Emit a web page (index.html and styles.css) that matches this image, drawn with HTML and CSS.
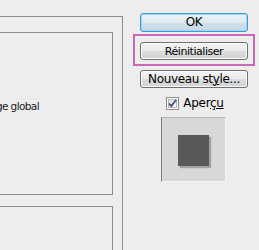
FILE: index.html
```html
<!DOCTYPE html>
<html lang="fr">
<head>
    <meta charset="UTF-8">
    <title>Style de calque</title>
    <link rel="stylesheet" href="styles.css">
</head>
<body>

    <!-- Left: settings panel (cut by the window edge) -->
    <div class="panel">
        <div class="group group-top">
            <div class="option-row">
                <span class="option-label">Utiliser l'éclairage global</span>
            </div>
        </div>
        <div class="group group-bottom"></div>
    </div>

    <!-- Right: dialog buttons and preview -->
    <div class="side">
        <button class="btn btn-default">OK</button>
        <div class="highlight">
            <button class="btn">Réinitialiser</button>
        </div>
        <button class="btn btn-big">Nouveau st<u>y</u>le...</button>

        <label class="preview-toggle">
            <svg class="check" width="13" height="13" viewBox="0 0 13 13">
                <defs>
                    <linearGradient id="cb" x1="0" y1="0" x2="1" y2="1">
                        <stop offset="0" stop-color="#dcdcdc"/>
                        <stop offset="1" stop-color="#ffffff"/>
                    </linearGradient>
                </defs>
                <rect x="0.5" y="0.5" width="12" height="12" fill="#fff" stroke="#8f8f8f"/>
                <rect x="2.5" y="2.5" width="8" height="8" fill="url(#cb)" stroke="#b9b9b9"/>
                <path d="M3 6.5 L5.3 9 L10 3" fill="none" stroke="#3d4f8a" stroke-width="1.8"/>
            </svg>
            <span>Aper<u>çu</u></span>
        </label>

        <div class="preview">
            <div class="swatch"></div>
        </div>
    </div>

</body>
</html>
```

FILE: styles.css
```css
/* General Styles */
body, html {
    margin: 0;
    padding: 0;
    height: 100%;
    overflow: hidden;
    background: #ededed;
    font-family: 'DejaVu Sans', sans-serif;
    color: #000;
}

body {
    display: flex;
    align-items: flex-start;
}

/* Left panel */
.panel {
    box-sizing: border-box;
    flex: none;
    width: 143px;
    height: 260px;
    margin-left: -20px;
    margin-top: 16px;
    border: 1px solid #8d8d8d;
    padding-top: 15px;
    padding-right: 9px;
}

.group {
    box-sizing: border-box;
    border: 1px solid #8d8d8d;
}

.group-top {
    height: 163px;
}

.group-bottom {
    height: 80px;
    margin-top: 11px;
}

.option-row {
    display: flex;
    justify-content: flex-end;
    width: 57px;
    margin-top: 67px;
}

.option-label {
    flex: none;
    white-space: nowrap;
    font-size: 10.5px;
    line-height: 13px;
    letter-spacing: -0.6px;
    color: #1b1b1b;
}

/* Right column */
.side {
    flex: none;
    width: 108px;
    margin-left: 17px;
    padding-top: 13px;
    display: flex;
    flex-direction: column;
    align-items: stretch;
}

.btn {
    box-sizing: border-box;
    height: 18px;
    padding: 0;
    border: 1px solid #707070;
    border-radius: 3px;
    background: linear-gradient(#f3f3f3 0%, #ebebeb 50%, #dcdcdc 51%, #d0d3d6 100%);
    box-shadow: inset 0 0 0 1px #fafafa;
    font-family: 'DejaVu Sans', sans-serif;
    font-size: 11px;
    letter-spacing: -0.45px;
    line-height: 15px;
    color: #000;
}

.btn u {
    text-decoration-thickness: 1px;
}

.btn-default {
    height: 19px;
    border-color: #3c9ad8;
    background: linear-gradient(#eaf3f8 0%, #dfebf2 50%, #cfe0ea 51%, #c4d8e4 100%);
    box-shadow: inset 0 0 0 1px #9fd4f2;
    font-size: 12px;
    letter-spacing: -0.3px;
}

.btn-big {
    margin-top: 4px;
    font-size: 12px;
    letter-spacing: -0.35px;
}

.highlight {
    display: flex;
    flex-direction: column;
    margin: 2px -7px 0;
    padding: 6px 5px 4px;
    border: 2px solid #c86ab5;
}

.preview-toggle {
    display: flex;
    align-items: center;
    justify-content: center;
    gap: 4px;
    margin-top: 9px;
    font-size: 12px;
    line-height: 13px;
    letter-spacing: -0.3px;
}

.check {
    display: block;
    margin-left: 2px;
}

.preview {
    box-sizing: border-box;
    align-self: center;
    width: 65px;
    height: 65px;
    margin-top: 7px;
    margin-left: -1px;
    padding-top: 17px;
    border-top: 1px solid #b4b4b4;
    border-left: 1px solid #7d7d7d;
    border-right: 1px solid #f5f5f5;
    border-bottom: 1px solid #f5f5f5;
    background: #d8d8d8;
}

.swatch {
    width: 31px;
    height: 31px;
    margin: 0 auto;
    background: #595959;
    box-shadow: 2px 2px 1px #a2a2a2;
}
```
